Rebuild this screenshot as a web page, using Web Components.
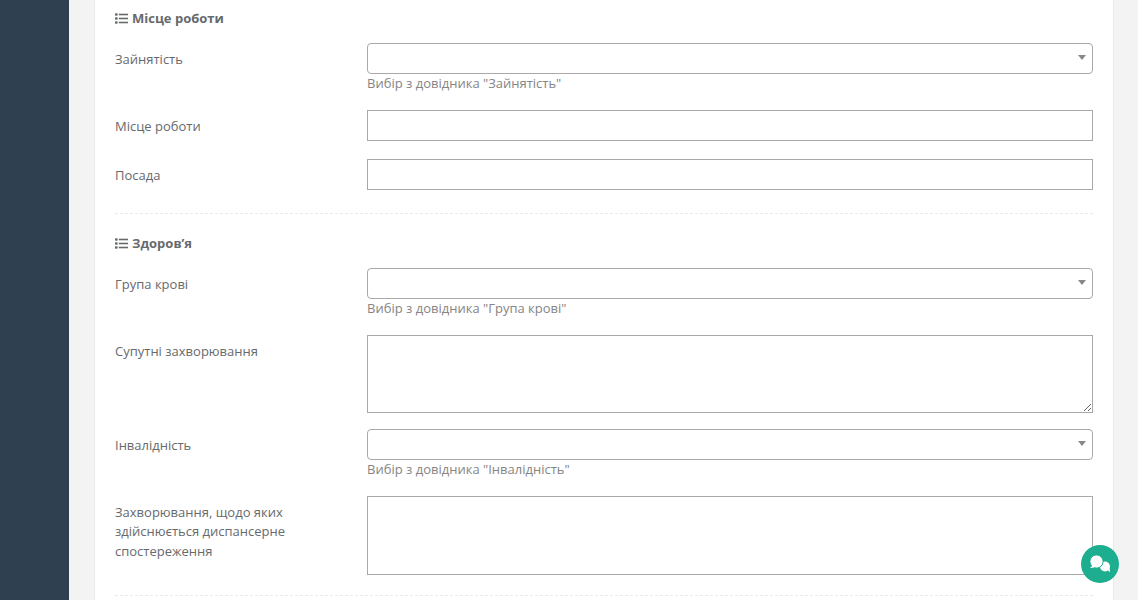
<!DOCTYPE html>
<html lang="uk">
<head>
<meta charset="utf-8">
<title>Форма</title>
<style>
  html, body { margin: 0; height: 600px; overflow: hidden; background: #f3f3f4; }
  body { font-family: "Open Sans", sans-serif; font-size: 13px; color: #676a6c; }
</style>
</head>
<body>
<app-shell>
  <form-card>
    <form-section title="Місце роботи" style="--head-top: 9px">
      <form-field label="Зайнятість" kind="select" help='Вибір з довідника "Зайнятість"'></form-field>
      <form-field label="Місце роботи" kind="input"></form-field>
      <form-field label="Посада" kind="input"></form-field>
    </form-section>
    <form-section title="Здоров’я" style="--foot: 4px">
      <form-field label="Група крові" kind="select" help='Вибір з довідника "Група крові"'></form-field>
      <form-field label="Супутні захворювання" kind="textarea" style="--area-h: 78px"></form-field>
      <form-field label="Інвалідність" kind="select" help='Вибір з довідника "Інвалідність"'></form-field>
      <form-field label="Захворювання, щодо яких здійснюється диспансерне спостереження" kind="textarea"></form-field>
    </form-section>
  </form-card>
  <chat-button></chat-button>
</app-shell>

<script>
window.customElements.define('app-shell', class extends HTMLElement {
  constructor() {
    super();
    const root = this.attachShadow({ mode: 'open' });
    root.innerHTML = `
    <style>
      :host { display: flex; height: 600px; overflow: hidden; }
      aside { flex: 0 0 69px; background: #2f4050; }
      main { flex: 1; padding: 0 24px 0 25px; min-width: 0; }
    </style>
    <aside></aside>
    <main><slot></slot></main>
    `;
  }
});

window.customElements.define('form-card', class extends HTMLElement {
  constructor() {
    super();
    const root = this.attachShadow({ mode: 'open' });
    root.innerHTML = `
    <style>
      :host {
        display: block;
        height: 600px;
        box-sizing: border-box;
        padding: 0 20px;
        background: #fff;
        border-left: 1px solid #e7eaec;
        border-right: 1px solid #e7eaec;
      }
    </style>
    <slot></slot>
    `;
  }
});

window.customElements.define('form-section', class extends HTMLElement {
  constructor() {
    super();
    const root = this.attachShadow({ mode: 'open' });
    root.innerHTML = `
    <style>
      :host {
        display: block;
        padding-bottom: var(--foot, 5px);
        margin-bottom: 20px;
        border-bottom: 1px dashed #e7eaec;
      }
      h4 {
        margin: 0 0 16px;
        padding-top: var(--head-top, 0);
        height: 18px;
        display: flex;
        align-items: center;
        gap: 4px;
        font-size: 13px;
        line-height: 18px;
        font-weight: 700;
        color: #676a6c;
      }
      svg { width: 13px; height: 13px; fill: #676a6c; }
    </style>
    <h4>
      <svg viewBox="0 0 13 13">
        <rect x="0" y="1.2" width="2.6" height="2.6" rx=".7"/>
        <rect x="0" y="5.2" width="2.6" height="2.6" rx=".7"/>
        <rect x="0" y="9.2" width="2.6" height="2.6" rx=".7"/>
        <rect x="3.8" y="1.7" width="9.2" height="1.6"/>
        <rect x="3.8" y="5.7" width="9.2" height="1.6"/>
        <rect x="3.8" y="9.7" width="9.2" height="1.6"/>
      </svg>
      <span id="title"></span>
    </h4>
    <slot></slot>
    `;
    root.querySelector('#title').textContent = this.getAttribute('title');
  }
});

window.customElements.define('form-field', class extends HTMLElement {
  constructor() {
    super();
    const root = this.attachShadow({ mode: 'open' });
    const kind = this.getAttribute('kind');
    let control = '<input type="text">';
    if (kind === 'select') control = '<div class="select"></div>';
    if (kind === 'textarea') control = '<textarea></textarea>';
    root.innerHTML = `
    <style>
      :host {
        display: grid;
        grid-template-columns: 252px 726px;
        margin-bottom: 18px;
        font-size: 13px;
        line-height: 19.5px;
      }
      :host([kind="textarea"]) { margin-bottom: 16px; }
      label { padding: 6.7px 30px 0 0; }
      input, textarea, .select {
        display: block;
        box-sizing: border-box;
        width: 726px;
        height: 31px;
        margin: 0;
        padding: 6px 12px;
        font: inherit;
        color: inherit;
        background: #fff;
        border: 1px solid #a9a9a9;
        border-radius: 0;
        outline: none;
      }
      textarea { height: var(--area-h, 79px); }
      .select { position: relative; border-radius: 4px; }
      .select::after {
        content: "";
        position: absolute;
        top: 11px;
        right: 6px;
        border: 4px solid transparent;
        border-top: 5px solid #888;
        border-bottom: 0;
      }
      small {
        display: block;
        height: 18px;
        font-size: 13px;
        line-height: 18px;
        color: #858585;
      }
    </style>
    <label id="label"></label>
    <div>${control}<small id="help"></small></div>
    `;
    root.querySelector('#label').textContent = this.getAttribute('label');
    const help = root.querySelector('#help');
    if (this.hasAttribute('help')) help.textContent = this.getAttribute('help');
    else help.remove();
  }
});

window.customElements.define('chat-button', class extends HTMLElement {
  constructor() {
    super();
    const root = this.attachShadow({ mode: 'open' });
    root.innerHTML = `
    <style>
      :host {
        position: absolute;
        left: 1081px;
        top: 545px;
        width: 38px;
        height: 38px;
        display: block;
        border-radius: 50%;
        background: #1dae8f;
      }
      svg { display: block; width: 38px; height: 38px; }
    </style>
    <svg viewBox="0 0 38 38">
      <circle cx="24" cy="21.5" r="5" fill="#fff"/>
      <path d="M26.5 25l2.6 2.2-.6-4z" fill="#fff"/>
      <circle cx="15.5" cy="16.5" r="6.6" fill="#fff" stroke="#1dae8f" stroke-width="1"/>
      <path d="M11.5 20.5l-2.6 2.6 4.6-.6z" fill="#fff"/>
    </svg>
    `;
  }
});
</script>
</body>
</html>
